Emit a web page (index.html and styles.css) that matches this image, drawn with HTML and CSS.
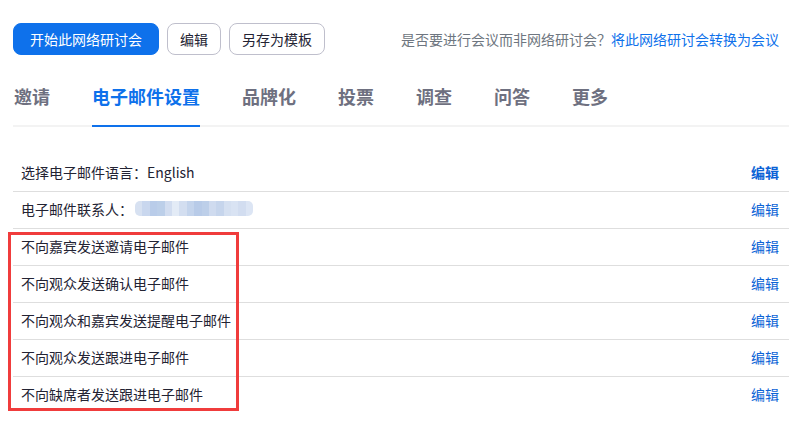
FILE: index.html
```html
<!DOCTYPE html>
<html lang="zh-CN">
<head>
<meta charset="utf-8">
<link rel="stylesheet" href="styles.css">
</head>
<body>
<div class="page">
  <div class="topbar">
    <div class="actions">
      <button class="btn btn-primary">开始此网络研讨会</button>
      <button class="btn btn-outline">编辑</button>
      <button class="btn btn-outline">另存为模板</button>
    </div>
    <div class="convert">是否要进行会议而非网络研讨会？<a class="link">将此网络研讨会转换为会议</a></div>
  </div>
  <div class="tabs">
    <div class="tab">邀请</div>
    <div class="tab active">电子邮件设置</div>
    <div class="tab">品牌化</div>
    <div class="tab">投票</div>
    <div class="tab">调查</div>
    <div class="tab">问答</div>
    <div class="tab">更多</div>
  </div>
  <div class="rows">
    <div class="row"><span>选择电子邮件语言：English</span><a class="link edit strong">编辑</a></div>
    <div class="row"><span class="contact">电子邮件联系人：<span class="blur"><i style="background:#d7e1f1"></i><i style="background:#c9d7ee"></i><i style="background:#b9cce9"></i><i style="background:#bccfe9"></i><i style="background:#d2ddf0"></i><i style="background:#e3ebf6"></i><i style="background:#d3def0"></i><i style="background:#c4d4ec"></i><i style="background:#b8cbe8"></i><i style="background:#bdcfe9"></i><i style="background:#cfdbef"></i><i style="background:#c6d5ec"></i><i style="background:#d5e0f1"></i><i style="background:#d9e3f3"></i><i style="background:#d2ddf0"></i><i style="background:#dce5f4"></i></span></span><a class="link edit">编辑</a></div>
    <div class="row"><span>不向嘉宾发送邀请电子邮件</span><a class="link edit">编辑</a></div>
    <div class="row"><span>不向观众发送确认电子邮件</span><a class="link edit">编辑</a></div>
    <div class="row"><span>不向观众和嘉宾发送提醒电子邮件</span><a class="link edit">编辑</a></div>
    <div class="row"><span>不向观众发送跟进电子邮件</span><a class="link edit">编辑</a></div>
    <div class="row"><span>不向缺席者发送跟进电子邮件</span><a class="link edit">编辑</a></div>
  </div>
  <div class="highlight"></div>
</div>
</body>
</html>
```

FILE: styles.css
```css
* { box-sizing: border-box; }
html, body { margin: 0; padding: 0; background: #fff; }
body {
  font-family: "Noto Sans CJK SC", "Lato", "Liberation Sans", sans-serif;
  color: #232333;
  font-size: 14px;
}
.page {
  position: relative;
  width: 776px;
  margin-left: 13px;
  padding-top: 23px;
}
.topbar {
  display: flex;
  align-items: center;
  justify-content: space-between;
  padding-right: 10px;
}
.actions { display: flex; gap: 8px; }
.btn {
  height: 32px;
  font-family: inherit;
  font-size: 14px;
  border-radius: 8px;
  line-height: 30px;
  cursor: pointer;
}
.btn-primary {
  background: #0e71eb;
  color: #fff;
  border: 1px solid #0e71eb;
  padding: 0 16px;
  width: 146px;
}
.btn-outline {
  background: #fff;
  color: #232333;
  border: 1px solid #bfbfcc;
  padding: 0 12px;
}
.convert {
  color: #6e7680;
  font-size: 14px;
}
.link {
  color: #0e71eb;
  text-decoration: none;
  cursor: pointer;
}
.tabs {
  display: flex;
  gap: 42px;
  margin-top: 30px;
  border-bottom: 2px solid #f3f3f3;
  padding-left: 1px;
}
.tab {
  font-size: 18px;
  font-weight: 700;
  line-height: 24px;
  color: #6e7080;
  padding-bottom: 17px;
  margin-top: -1px;
  border-bottom: 2px solid transparent;
  margin-bottom: -2px;
}
.tab.active {
  color: #0e71eb;
  border-bottom-color: #0e71eb;
}
.rows { margin-top: 28px; }
.row {
  display: flex;
  align-items: center;
  justify-content: space-between;
  height: 37px;
  padding: 0 10px 3px 8px;
  border-bottom: 1px solid #dedede;
}
.row:last-child { border-bottom: none; }
.edit { font-size: 14px; color: #0b63d6; }
.edit.strong { font-weight: 700; }
.contact { display: flex; align-items: center; }
.blur {
  display: inline-flex;
  height: 15px;
  border-radius: 5px;
  overflow: hidden;
  margin-left: 2px;
}
.blur i { display: block; width: 7.4px; height: 100%; }
.highlight {
  position: absolute;
  left: -5px;
  top: 232px;
  width: 231px;
  height: 179px;
  border: 3px solid #f03c3c;
}
```
